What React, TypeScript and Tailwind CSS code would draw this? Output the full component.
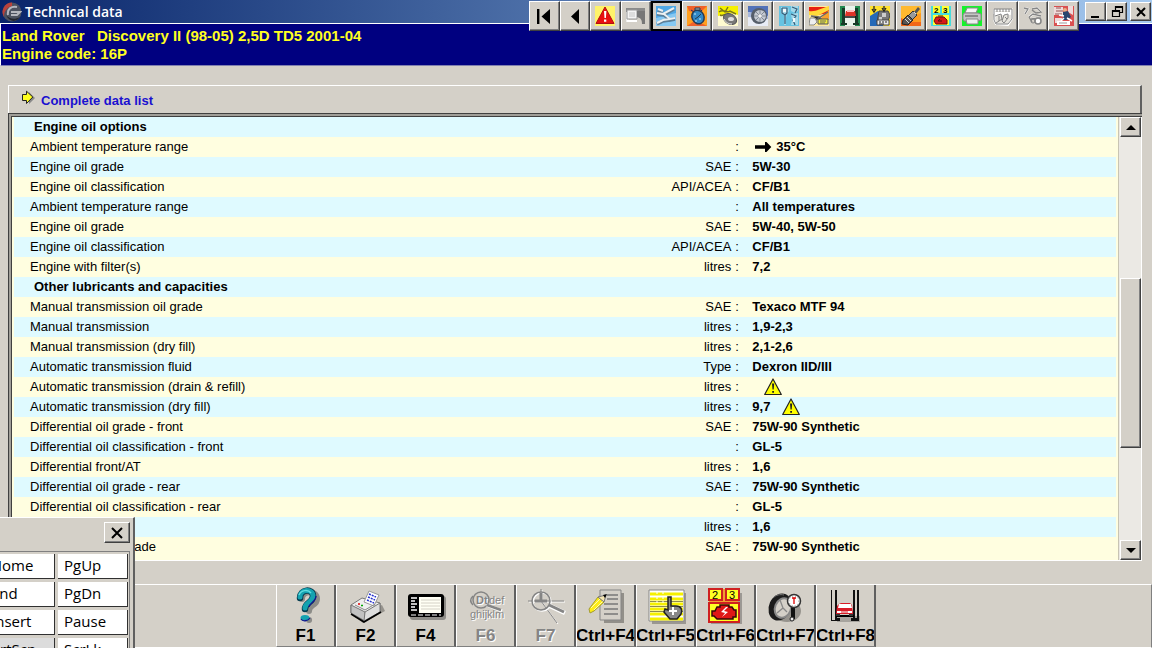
import React from 'react';

type Row = {
  label: string;
  unit?: string;
  value?: string;
  heading?: boolean;
  arrow?: boolean;
  warning?: boolean;
};

const ROWS: Row[] = [
  { label: 'Engine oil options', heading: true },
  { label: 'Ambient temperature range', value: '35°C', arrow: true },
  { label: 'Engine oil grade', unit: 'SAE', value: '5W-30' },
  { label: 'Engine oil classification', unit: 'API/ACEA', value: 'CF/B1' },
  { label: 'Ambient temperature range', value: 'All temperatures' },
  { label: 'Engine oil grade', unit: 'SAE', value: '5W-40, 5W-50' },
  { label: 'Engine oil classification', unit: 'API/ACEA', value: 'CF/B1' },
  { label: 'Engine with filter(s)', unit: 'litres', value: '7,2' },
  { label: 'Other lubricants and capacities', heading: true },
  { label: 'Manual transmission oil grade', unit: 'SAE', value: 'Texaco MTF 94' },
  { label: 'Manual transmission', unit: 'litres', value: '1,9-2,3' },
  { label: 'Manual transmission (dry fill)', unit: 'litres', value: '2,1-2,6' },
  { label: 'Automatic transmission fluid', unit: 'Type', value: 'Dexron IID/III' },
  { label: 'Automatic transmission (drain & refill)', unit: 'litres', warning: true },
  { label: 'Automatic transmission (dry fill)', unit: 'litres', value: '9,7', warning: true },
  { label: 'Differential oil grade - front', unit: 'SAE', value: '75W-90 Synthetic' },
  { label: 'Differential oil classification - front', value: 'GL-5' },
  { label: 'Differential front/AT', unit: 'litres', value: '1,6' },
  { label: 'Differential oil grade - rear', unit: 'SAE', value: '75W-90 Synthetic' },
  { label: 'Differential oil classification - rear', value: 'GL-5' },
  { label: 'Differential rear', unit: 'litres', value: '1,6' },
  { label: 'Transfer box oil grade', unit: 'SAE', value: '75W-90 Synthetic' },
];

// Classic raised edge used by every button
const RAISED =
  'bg-[#d4d0c8] border border-t-white border-l-white border-r-[#404040] border-b-[#404040] shadow-[inset_-1px_-1px_0_#808080]';

const WarningIcon = () => (
  <svg width="18" height="18" viewBox="0 0 18 18" className="shrink-0">
    <path d="M9 1 17.3 16.5H.7Z" fill="#ff0" stroke="#222" strokeWidth="1.2" strokeLinejoin="round" />
    <path d="M8 5.5h2.2l-.5 6H8.5ZM8.2 13h1.8v1.8H8.2Z" fill="#222" />
  </svg>
);

const ArrowIcon = () => (
  <svg width="18" height="12" viewBox="0 0 18 12" className="shrink-0">
    <path d="M1 4.3h10V1h1.500L17.300 6l-4.800 5H11V7.700H1Z" fill="#000" />
  </svg>
);

/* ---------- small toolbar pictures, 20x20 ---------- */

const TOOLS: { name: string; art: React.ReactNode; active?: boolean; disabled?: boolean }[] = [
  {
    name: 'First',
    art: <path d="M3 3h2.400v15H3ZM16 3v15L7.500 10.500Z" fill="#000" />,
  },
  {
    name: 'Previous',
    art: <path d="M14 3v15L6 10.500Z" fill="#000" />,
  },
  {
    name: 'Warnings',
    art: (
      <>
        <path d="M0 0h20v20H0Z" fill="#fff36a" />
        <path d="M10 1 19 17.5H1Z" fill="#e81010" stroke="#b01010" />
        <path d="M9 5h2.4l-.5 7H9.500ZM9 13.500h2.300v2.300H9Z" fill="#fff" />
      </>
    ),
  },
  {
    name: 'Component location',
    art: (
      <>
        <path d="M0 2h19v4H0Z" fill="#8a8a8a" />
        <path d="M0 6h3v10H0Z" fill="#eee" />
        <path d="M1 4h10v9H1Z" fill="#f4f4f4" stroke="#999" />
        <path d="M3 6h6v5H3Z" fill="#ddd" />
        <path d="M1 15h10" stroke="#fff" strokeWidth="2" />
        <path d="M11 5h8v13h-3c0-4-1-6-5-7Z" fill="#777" />
      </>
    ),
  },
  {
    name: 'Technical data',
    active: true,
    art: (
      <>
        <path d="M0 0h20v20H0Z" fill="#4fa8e6" />
        <path d="M0 12 20 7v13H0Z" fill="#86c8f2" />
        <path d="m1 8 6 1 11-6M2 4l5 2M8 9l6 5 5-1M1 18l6-3 7-1" stroke="#5d7f98" strokeWidth="3.500" fill="none" />
        <path d="m1 7 6 1 11-6M2 3l5 2M8 8l6 5 5-1M1 17l6-3 7-1" stroke="#edf1f2" strokeWidth="2" fill="none" />
      </>
    ),
  },
  {
    name: 'Service times',
    art: (
      <>
        <path d="M0 0h20v20H0Z" fill="#ffa020" />
        <path d="M0 0h20L12 8 2 5ZM0 20l6-4 10 2 4 2Z" fill="#f0602a" />
        <ellipse cx="11" cy="11" rx="6" ry="7" fill="#3188c5" stroke="#263b55" strokeWidth="1.500" transform="rotate(-25 11 11)" />
        <path d="M8 2h5v2H8ZM4 4l3 2M15 4l-2 2M11 11l3-3M11 11l-3 2" stroke="#233c55" fill="#bbb" />
        <path d="M7 8h2M12 13h2M8 15h2" stroke="#bdeaff" />
      </>
    ),
  },
  {
    name: 'Timing belts',
    art: (
      <>
        <path d="M0 0h20v20H0Z" fill="#fffbd0" />
        <path d="M0 0h20v9l-8-2-12 3Z" fill="#f5f000" />
        <path d="M1 6c5-4 7 2 11-1l6 3M2 2l5 4 3-5M2 9c4 2 4-3 8 1" stroke="#78751b" fill="none" strokeWidth="1.400" />
        <ellipse cx="12" cy="13" rx="7" ry="5" fill="#777" stroke="#555" transform="rotate(30 12 13)" />
        <ellipse cx="13" cy="13" rx="3" ry="2" fill="#ddd" />
        <path d="M6 13c2 4 5 5 8 5" stroke="#eee" fill="none" />
      </>
    ),
  },
  {
    name: 'Wheel alignment',
    art: (
      <>
        <path d="M0 0h20v20H0Z" fill="#e8ecf6" />
        <path d="M0 0h20v10L0 6Z" fill="#5272b8" />
        <path d="M0 6 20 10v3L0 11Z" fill="#a8b8dc" />
        <circle cx="11" cy="10" r="8" fill="#565e6a" />
        <circle cx="12" cy="10" r="6" fill="#c5cad2" />
        <path d="M12 4v12M6 10h12M8 6l8 8M8 14l8-8" stroke="#828a95" />
        <circle cx="12" cy="10" r="1.800" fill="#eee" />
      </>
    ),
  },
  {
    name: 'Tightening torques',
    art: (
      <>
        <path d="M0 0h20v20H0Z" fill="#66c3e2" />
        <path d="M2 1h7l1 4-2 3-1 4v7H5V9L2 7ZM12 0h7v5l-3 2-4-2ZM12 8l7-1v12h-7l1-5Z" fill="#a6d9e9" />
        <path d="M3 2h5v5l-2 2v9M3 2v5l3 2M13 1l5 2-2 4M12 8l5 2-3 4 2 5" stroke="#345b78" fill="none" strokeWidth="1.200" />
        <path d="M4 3h3v3H4ZM14 12h2v4h-2Z" fill="#f4fafc" />
      </>
    ),
  },
  {
    name: 'Airbags',
    art: (
      <>
        <path d="M0 0h20v20H0Z" fill="#ffe9a0" />
        <path d="M0 1h20v6L8 9 0 6Z" fill="#e82010" />
        <path d="M0 5c7 1 10-2 20-5v4L8 10 0 9Z" fill="#ffd93a" />
        <path d="M20 4v10H10Z" fill="#f7a02c" />
        <path d="M1 18 19 6M2 10l8 1 6 6" stroke="#666" strokeWidth="1.500" />
        <path d="M9 13h10v5H9Z" fill="#f3ed38" stroke="#555" />
        <path d="M11 15h6M11 17h5" stroke="#666" />
        <path d="M1 12h5l2 4-3 3H0Z" fill="#eee" stroke="#888" />
      </>
    ),
  },
  {
    name: 'Jacking points',
    art: (
      <>
        <path d="M0 0h20v20H0Z" fill="#218950" />
        <path d="M5 0h10v20H5Z" fill="#e9f3ec" />
        <path d="M2 2h3v15h2v2H1v-2h1ZM15 2h3v15h1v2h-6v-2h2Z" fill="#173a28" />
        <path d="M5 11h11" stroke="#111" strokeWidth="1.500" />
        <path d="M6 5h9l1 5H5Z" fill="#df3328" />
        <path d="M7 4h7v2H7Z" fill="#fbb" />
      </>
    ),
  },
  {
    name: 'Engine management',
    art: (
      <>
        <path d="M0 0h20v20H0Z" fill="#ffe22c" />
        <path d="m0 10 8-5 7 5-2 10H0Z" fill="#2469b7" />
        <path d="M9 5h9l2 4-2 7H7Z" fill="#777" stroke="#444" />
        <path d="M12 7h4v4h-4ZM9 11h3v4H9Z" fill="#ccc" />
        <path d="M4 0v4M2 3l2 3 2-3M14 0v3M12 2l2 3 2-3" stroke="#222" fill="none" strokeWidth="1.300" />
        <path d="M7 14h12v5H7Z" fill="#e9e9e9" stroke="#444" />
        <path d="M9 16h2M12 16h2M15 16h2M9 18h5" stroke="#222" />
      </>
    ),
  },
  {
    name: 'Spark plugs',
    art: (
      <>
        <path d="M0 0h20v20H0Z" fill="#ff9a1e" />
        <path d="M0 0h20v7L0 14Z" fill="#ffb92f" />
        <path d="M0 12v8h20v-4L9 16Z" fill="#f26719" />
        <path d="m17 1 2 2-4 5-2-2Z" fill="#555" />
        <path d="m12 5 4 4-6 6-4-4Z" fill="#999" stroke="#333" />
        <path d="m7 9 5 5-5 5-6-1 1-4Z" fill="#555" stroke="#222" />
        <path d="m4 13 4 4M6 11l4 4M13 6l2 2" stroke="#ddd" />
      </>
    ),
  },
  {
    name: 'Trouble codes',
    art: (
      <>
        <path d="M0 0h20v20H0Z" fill="#46dcdd" />
        <path d="M2 0h7v7H2ZM11 0h7v7h-7ZM2 9h16v10H2Z" fill="#ffff35" />
        <text x="3" y="7" fontSize="8" fontWeight="bold" fontFamily="Liberation Sans, sans-serif">2</text>
        <text x="12" y="7" fontSize="8" fontWeight="bold" fontFamily="Liberation Sans, sans-serif">3</text>
        <path d="M5 11h8l3 3v4H5l-2-3Z" fill="#d81818" stroke="#6d1010" />
        <path d="M7 10h5M9 13l-2 2h4" stroke="#501010" fill="none" />
      </>
    ),
  },
  {
    name: 'Print',
    art: (
      <>
        <path d="M0 0h20v20H0Z" fill="#16f22c" />
        <path d="M5 2h11l-2 5H3Z" fill="#f5f5f5" stroke="#888" />
        <path d="M2 7h14l3 1v6l-3 1H2l-1-2V9Z" fill="#c4c4c4" stroke="#888" />
        <path d="M4 13h12v5H5Z" fill="#eee" stroke="#888" />
        <path d="M3 10h13" stroke="#777" strokeWidth="1.500" />
      </>
    ),
  },
  {
    name: 'Wiring diagrams',
    disabled: true,
    art: (
      <>
        <path d="M2 8h15l2-3v8l-4 6-12-1-2-4ZM1 4h17v3H1Z" stroke="#fff" fill="#e6e4de" strokeWidth="2" />
        <path d="M1 7V3h18v10l-4 5H3l-2-4ZM4 3v3M7 3v3M10 3v3M13 3v3M16 3v3M2 10l6-2 1 5-6 4M11 9l4-1v4l-4 5-2-2ZM6 10v5M12 11l2 2" stroke="#858585" fill="none" />
      </>
    ),
  },
  {
    name: 'Air conditioning',
    disabled: true,
    art: (
      <>
        <path d="m1 2 4 1-3 5M9 3l5-1 4 4M6 11l4-3 8 2M8 13l10-1" stroke="#fff" fill="none" strokeWidth="2.200" />
        <path d="m1 2 4 1-3 5M9 3l5-1 4 4-5 1-4-3M6 11l4-3 8 2M8 13l10-1M6 11l3 5" stroke="#858585" fill="none" strokeWidth="1.300" />
        <circle cx="15" cy="15" r="3" stroke="#858585" fill="#fff" strokeWidth="1.500" />
        <circle cx="10" cy="15" r="2" stroke="#858585" fill="none" />
      </>
    ),
  },
  {
    name: 'Repair times',
    art: (
      <>
        <path d="M0 0h20v20H0Z" fill="#d95050" />
        <path d="M0 1h9v8H0ZM14 0h5v9l-5-3ZM1 12h7v5H1Z" fill="#f0dada" />
        <path d="M2 2h5M2 5h7M1 8h7" stroke="#915555" />
        <circle cx="11" cy="4" r="2" fill="#e8b088" />
        <path d="m9 6 5-1 3 6-4 3H9Z" fill="#29456f" />
        <path d="m5 9 5 1M13 12l5 3M10 12l-3 3" stroke="#fff" strokeWidth="1.500" />
        <path d="M3 15h13v4H3Z" fill="#fff" />
        <path d="M5 17h8" stroke="#999" />
      </>
    ),
  },
];

/* ---------- function key pictures, 58x40 ---------- */

const KEYS: { label: string; name: string; art: React.ReactNode; disabled?: boolean }[] = [
  {
    label: 'F1',
    name: 'Help',
    art: (
      <>
        <path d="M25 14c0-9 15-9 15 0 0 7-8 5-8 12M32 35h.1" stroke="#8c8c88" strokeWidth="6" fill="none" strokeLinecap="round" />
        <path d="M23 13c0-9 13-10 13-2 0 7-8 6-8 13" stroke="#063c50" strokeWidth="6.500" fill="none" strokeLinecap="round" />
        <path d="M23 12c0-8 13-9 13-1 0 7-8 6-8 12" stroke="#14a2b0" strokeWidth="5" fill="none" strokeLinecap="round" />
        <path d="M22 10c2-5 9-6 12-2" stroke="#5edce0" strokeWidth="1.500" fill="none" />
        <ellipse cx="28" cy="33" rx="4.500" ry="3" fill="#14a2b0" />
        <path d="M24 34c2 3 7 2 9-1M32 22c0-4 7-5 7-11" stroke="#15158c" fill="none" strokeWidth="1.300" />
      </>
    ),
  },
  {
    label: 'F2',
    name: 'Print',
    art: (
      <>
        <path d="m17 31 9 7 22-12-3-6Z" fill="#96938d" />
        <path d="m14 20 11-7 18 5v9L27 36l-13-8Z" fill="#eee" stroke="#777" />
        <path d="m14 20 14 7v9l-14-8Z" fill="#c2c2c2" stroke="#777" />
        <path d="m28 27 15-9v9L27 36Z" fill="#dedede" stroke="#777" />
        <path d="m14 29 13 8 17-10" stroke="#000" strokeWidth="1.500" fill="none" />
        <path d="m27 17 5-11 10 4-5 11Z" fill="#fff" stroke="#999" />
        <path d="m32 9 7 3M31 12l7 3M30 15l7 3" stroke="#2630cc" strokeWidth="1.500" strokeDasharray="2 1" />
        <path d="m18 20 10 5 10-6" stroke="#888" fill="none" />
        <path d="M21 19h2" stroke="#d00" strokeWidth="1.500" />
        <path d="M24 20.500h2" stroke="#0a0" strokeWidth="1.500" />
      </>
    ),
  },
  {
    label: 'F4',
    name: 'Full screen',
    art: (
      <>
        <rect x="13" y="11" width="36" height="24" rx="3" fill="#8e8c87" />
        <rect x="11" y="9" width="36" height="23" rx="3" fill="#000" />
        <path d="M22 12h22v16H22Z" fill="#fffff4" />
        <path d="M24 15h19M24 18h19M24 21h19M24 24h19" stroke="#d4d1c6" />
        <path d="M14 13h6M14 16h4M14 19h6M14 22h4M14 25h6" stroke="#fff" strokeWidth="1.500" />
        <path d="M14 30h30" stroke="#fff" strokeDasharray="5 2" />
      </>
    ),
  },
  {
    label: 'F6',
    name: 'Search text',
    disabled: true,
    art: (
      <>
        <g fill="#fff" fontFamily="Liberation Sans, sans-serif" fontSize="11">
          <text x="20" y="20" fontWeight="bold">Dt</text>
          <text x="33" y="20">def</text>
          <text x="14" y="34">ghijklm</text>
        </g>
        <g fill="#858585" fontFamily="Liberation Sans, sans-serif" fontSize="11">
          <text x="19" y="19" fontWeight="bold">Dt</text>
          <text x="32" y="19">def</text>
          <text x="13" y="33">ghijklm</text>
        </g>
        <path d="M16 11c-3 3-3 6 0 9" stroke="#858585" strokeWidth="1.500" fill="none" />
        <circle cx="24" cy="15" r="8" stroke="#858585" strokeWidth="1.500" fill="none" />
        <path d="m30 20 15 6" stroke="#fff" strokeWidth="3.500" />
        <path d="m30 20 14 5" stroke="#858585" strokeWidth="2.500" />
      </>
    ),
  },
  {
    label: 'F7',
    name: 'Locate',
    disabled: true,
    art: (
      <>
        <path d="M12 17h36M25 5v12l16 22" stroke="#fff" fill="none" />
        <path d="M11 16h36M24 4v12l16 22" stroke="#858585" fill="none" />
        <circle cx="25" cy="17" r="9" stroke="#fff" strokeWidth="1.500" fill="none" />
        <circle cx="24" cy="16" r="9" stroke="#858585" strokeWidth="1.500" fill="none" />
        <path d="M24 8v8M18 16h12" stroke="#858585" strokeWidth="3" />
        <path d="m33 21 15 7" stroke="#fff" strokeWidth="4.500" />
        <path d="m32 20 15 7" stroke="#858585" strokeWidth="3" />
      </>
    ),
  },
  {
    label: 'Ctrl+F4',
    name: 'Notes',
    art: (
      <>
        <path d="M27 8h20v30H27Z" fill="#928f89" />
        <path d="M23 5h21v30H23Z" fill="#d4d0c8" stroke="#858585" />
        <path d="M30 10h11M30 14h11M27 19h14M27 24h14M27 29h14" stroke="#777" strokeWidth="1.500" />
        <path d="m12 24 9-12 6 5-10 9-4 2Z" fill="#ffed16" stroke="#a39c30" />
        <path d="m14 23 9-9M17 25l9-9" stroke="#fffbb0" />
        <path d="m21 12 8-2-2 7Z" fill="#f5e5b0" stroke="#777" />
        <path d="m26 10 4-1-2 4Z" fill="#000" />
      </>
    ),
  },
  {
    label: 'Ctrl+F5',
    name: 'Select rows',
    art: (
      <>
        <path d="M15 8h34v31H15Z" fill="#9a9792" />
        <path d="M12 5h35v31H12Z" fill="#fff" stroke="#888" />
        <path d="M13 9h33M13 14h33M13 19h33M13 24h33M13 29h33M13 34h33" stroke="#f5f000" strokeWidth="3" />
        <path d="M13 16.500h33M13 21.500h33M13 26.500h33" stroke="#8e8a50" />
        <path d="M20 6v12M26 6v12" stroke="#fff" strokeDasharray="3 2" />
        <path d="M31 12h3v9h5c5 0 7 4 5 8l-4 5h-7l-6-7 1-3 3 1Z" fill="#888" stroke="#222" strokeWidth="1.500" />
        <path d="M36 22v8M32 26h8" stroke="#fff" strokeWidth="2" />
      </>
    ),
  },
  {
    label: 'Ctrl+F6',
    name: 'Trouble codes',
    art: (
      <>
        <path d="M14 8h31v31H14Z" fill="#9c9994" />
        <path d="M12 4h29v33H12Z" fill="#f0a030" />
        <path d="M12 4h13v11H12ZM29 4h13v11H29ZM12 18h30v19H12Z" fill="#ffff24" stroke="#cf2020" strokeWidth="2" />
        <text x="15" y="14" fontSize="11" fontFamily="Liberation Sans, sans-serif">2</text>
        <text x="32" y="14" fontSize="11" fontFamily="Liberation Sans, sans-serif">3</text>
        <path d="M20 22h3v-2h9v2h3l2 3h2v7h-3v2H20l-3-3h-2v-5h3Z" fill="#df1717" stroke="#340808" strokeWidth="1.500" />
        <path d="m29 22-5 5 4 1-3 4 6-5-4-1 4-4Z" fill="#fff" />
      </>
    ),
  },
  {
    label: 'Ctrl+F7',
    name: 'Tyre pressures',
    art: (
      <>
        <ellipse cx="30" cy="26" rx="14" ry="11" fill="#96938d" />
        <ellipse cx="23" cy="22" rx="11" ry="14" fill="#1c1c1c" transform="rotate(25 23 22)" />
        <ellipse cx="26" cy="23" rx="8" ry="10" fill="#d4d0c8" stroke="#888" strokeWidth="2" transform="rotate(22 26 23)" />
        <path d="m23 15 3 8-6 5M26 23l4 4" stroke="#888" strokeWidth="1.300" fill="none" />
        <path d="M16 13c3-3 7-4 11-3" stroke="#777" fill="none" />
        <path d="M34 22h4v12h-4Z" fill="#111" />
        <circle cx="37" cy="16" r="6.500" fill="#fff" stroke="#333" strokeWidth="1.500" />
        <circle cx="37" cy="16" r="5" stroke="#888" fill="none" strokeDasharray="1 2" />
        <path d="M35 13h4M37 13v6" stroke="#d00" strokeWidth="1.300" />
        <circle cx="35" cy="34" r="2" fill="#eee" stroke="#222" />
      </>
    ),
  },
  {
    label: 'Ctrl+F8',
    name: 'Vehicle lift',
    art: (
      <>
        <path d="M20 31h23v6H20Z" fill="#a7a49e" />
        <path d="M14 5h1v30h3V5h2v28h3v3h-9ZM36 5h2v28h2V5h2v31h-8v-3h2Z" fill="#111" />
        <path d="M19 31h18" stroke="#000" strokeWidth="2" />
        <path d="m22 19 2-1h9l2 2 1 9H19l1-8Z" fill="#d81c27" />
        <path d="m22 19-1 4h14l-1-4ZM20 26h4v2h-4ZM31 26h4v2h-4Z" fill="#fff" />
        <path d="M24 27h7" stroke="#fff" />
        <path d="M19 29h4v2h-4ZM32 29h4v2h-4Z" fill="#333" />
      </>
    ),
  },
];

const TitleBar = () => (
  <div className="flex h-6 items-center border-b border-white bg-linear-to-r from-[#0a246a] to-[#a6caf0] pl-[2px]">
    <svg width="20" height="20" viewBox="0 0 20 20">
      <circle cx="10" cy="10" r="9.500" fill="#4c5260" />
      <path d="M10 .5A9.500 9.500 0 0 0 2 15c0-5 2-9 8-11Z" fill="#b9423c" />
      <path d="M6 13c-1-6 3-9 9-8M9 10h9l-3 3H9" stroke="#b4b6be" strokeWidth="2" fill="none" />
      <path d="M4 13c3 4 9 5 14 2-3 5-10 6-14-2Z" fill="#22252e" />
    </svg>
    <h1 className="ml-[3px] font-['Open_Sans',sans-serif] text-sm leading-5 font-semibold text-white">Technical data</h1>
  </div>
);

const WindowButton = ({ name, children }: { name: string; children: React.ReactNode }) => (
  <button aria-label={name} className={`flex h-[19px] w-[21px] items-center justify-center ${RAISED}`}>
    <svg width="16" height="14" viewBox="0 0 16 14" fill="none" stroke="#000" strokeWidth="2" className="shrink-0">
      {children}
    </svg>
  </button>
);

const TopControls = () => (
  <div className="absolute top-px right-0 flex items-start">
    <div className="grid w-[550px] grid-cols-18">
      {TOOLS.map((tool) => (
        <button
          key={tool.name}
          aria-label={tool.name}
          disabled={tool.disabled}
          className={`flex h-[30px] items-center justify-center ${RAISED} ${tool.active ? 'outline-2 -outline-offset-2 outline-black' : ''}`}
        >
          <svg width="20" height="20" viewBox="0 0 20 20" className="shrink-0">
            {tool.art}
          </svg>
        </button>
      ))}
    </div>
    <div className="mt-px mr-px ml-[6px] flex">
      <WindowButton name="Minimise">
        <path d="M3 12h8" />
      </WindowButton>
      <WindowButton name="Restore">
        <path d="M6.500 5V1.500h7v6H11M3.500 5.500h7v6h-7Z" strokeWidth="1.200" />
        <path d="M6 2h8M3 6h8" />
      </WindowButton>
      <div className="ml-[3px]">
        <WindowButton name="Close">
          <path d="m4 3 8 8M12 3l-8 8" />
        </WindowButton>
      </div>
    </div>
  </div>
);

const ValueCell = ({ row }: { row: Row }) => (
  <div className="flex h-5 items-center">
    {row.arrow && (
      <span className="mr-1 ml-[2px]">
        <ArrowIcon />
      </span>
    )}
    {row.value}
    {row.warning && (
      <span className="ml-3">
        <WarningIcon />
      </span>
    )}
  </div>
);

const DataTable = () => (
  <table className="w-full table-fixed border-collapse text-[13px] leading-5">
    <colgroup>
      <col />
      <col className="w-[17%]" />
      <col className="w-[21px]" />
      <col className="w-[33%]" />
    </colgroup>
    <tbody>
      {ROWS.map((row, i) =>
        row.heading ? (
          <tr key={i} className="h-5 odd:bg-[#dffaff] even:bg-[#fffee0]">
            <th colSpan={4} className="p-0 pl-5 text-left font-bold">
              {row.label}
            </th>
          </tr>
        ) : (
          <tr key={i} className="h-5 odd:bg-[#dffaff] even:bg-[#fffee0]">
            <th className="p-0 pl-4 text-left font-normal whitespace-nowrap">{row.label}</th>
            <td className="p-0 text-right">{row.unit}</td>
            <td className="p-0 pl-1">:</td>
            <td className="p-0 font-bold">
              <ValueCell row={row} />
            </td>
          </tr>
        ),
      )}
    </tbody>
  </table>
);

const ScrollBar = () => (
  <div className="flex w-6 shrink-0 flex-col border-x border-l-[#c8c4b4] border-r-white bg-[#ebe9e4] pl-px">
    <button aria-label="Scroll up" className={`flex h-5 w-full items-center justify-center ${RAISED}`}>
      <svg width="10" height="5" viewBox="0 0 10 5">
        <path d="M5 0 10 5H0Z" />
      </svg>
    </button>
    <div className="flex-[142]" />
    <div className={`flex-[169] ${RAISED}`} />
    <div className="flex-[92]" />
    <button aria-label="Scroll down" className={`flex h-5 w-full items-center justify-center ${RAISED}`}>
      <svg width="10" height="5" viewBox="0 0 10 5">
        <path d="M0 0h10L5 5Z" />
      </svg>
    </button>
  </div>
);

const FunctionKeys = () => (
  <footer className="flex h-16 justify-center border-y border-r border-t-white border-r-[#808080] border-b-white pl-px">
    {KEYS.map((key) => (
      <button
        key={key.label}
        title={key.name}
        disabled={key.disabled}
        className="flex w-[60px] flex-col items-center overflow-hidden border-r-2 border-b border-l border-l-white border-r-[#606060] border-b-[#808080]"
      >
        <svg width="58" height="40" viewBox="0 0 58 40" className="shrink-0">
          {key.art}
        </svg>
        <span
          className={`mt-px text-[17px] leading-5 font-bold whitespace-nowrap ${key.disabled ? 'text-[#858585] [text-shadow:1px_1px_0_#fff]' : 'text-black'}`}
        >
          {key.label}
        </span>
      </button>
    ))}
  </footer>
);

const SCREEN_KEYS = ['Home', 'PgUp', 'End', 'PgDn', 'Insert', 'Pause', 'PrtScn', 'ScrLk'];

// Floating keyboard that hangs off the bottom left corner of the window
const OnScreenKeyboard = () => (
  <aside className="absolute bottom-0 left-0 flex h-[131px] w-[135px] flex-col items-end overflow-hidden border-t border-r-2 border-t-white border-r-[#606060] bg-[#d4d0c8] font-['Open_Sans',sans-serif]">
    <button aria-label="Close keyboard" className={`mt-1 mr-[3px] flex h-[21px] w-[26px] shrink-0 items-center justify-center ${RAISED}`}>
      <svg width="14" height="12" viewBox="0 0 14 12" stroke="#000" strokeWidth="2">
        <path d="m2 1 10 10M12 1 2 11" />
      </svg>
    </button>
    <div className="mt-2 mr-[3px] grid shrink-0 grid-cols-[70px_70px] gap-[3px] border-t border-r border-[#808080] pt-[2px] pr-px">
      {SCREEN_KEYS.map((key) => (
        <button
          key={key}
          className={`h-[25px] border-r border-b border-[#303030] pb-[3px] pl-[6px] text-left text-[15px] leading-5 ${key === 'PrtScn' ? 'bg-[#dcdcdc]' : 'bg-white'}`}
        >
          {key}
        </button>
      ))}
    </div>
  </aside>
);

const App: React.FC = () => {
  return (
    <div className="relative flex h-screen flex-col overflow-hidden bg-[#d4d0c8] font-['Liberation_Sans',Arial,sans-serif] text-black">
      <header>
        <TitleBar />
        <div className="border-b border-l border-b-[#8080b0] border-l-white bg-[#000080] px-px pt-[3px] pb-[2px] text-[15px] leading-[18px] font-bold text-[#ffff20]">
          <p className="whitespace-pre">{'Land Rover   Discovery II (98-05) 2,5D TD5 2001-04'}</p>
          <p>Engine code: 16P</p>
        </div>
      </header>
      <TopControls />

      <main className="mt-[19px] mr-[10px] mb-[23px] ml-2 flex min-h-0 flex-1 flex-col">
        <div className="flex h-7 shrink-0 items-center border-t border-r-2 border-l border-t-white border-r-[#606060] border-l-white pl-3">
          <svg width="14" height="16" viewBox="0 0 14 16" className="mb-1">
            <path d="M3 4h4V1l6 6-6 6v-3H3Z" fill="#888" transform="translate(1 1)" />
            <path d="M1.500 4.500h4V1.200L11.800 7l-6.300 6.500v-3h-4Z" fill="#ffff20" stroke="#222" />
          </svg>
          <h2 className="mt-[2px] ml-[6px] text-[13px] leading-5 font-bold text-[#1a10d0]">Complete data list</h2>
        </div>
        <section className="flex min-h-0 flex-1 border-t-4 border-b border-l-4 border-double border-t-[#404040] border-b-white border-l-[#404040] bg-[#a09e98]">
          <div className="min-w-0 flex-1 overflow-hidden bg-[#fffee0] px-[2px]">
            <DataTable />
          </div>
          <ScrollBar />
        </section>
      </main>

      <FunctionKeys />
      <OnScreenKeyboard />
    </div>
  );
};

export default App;
